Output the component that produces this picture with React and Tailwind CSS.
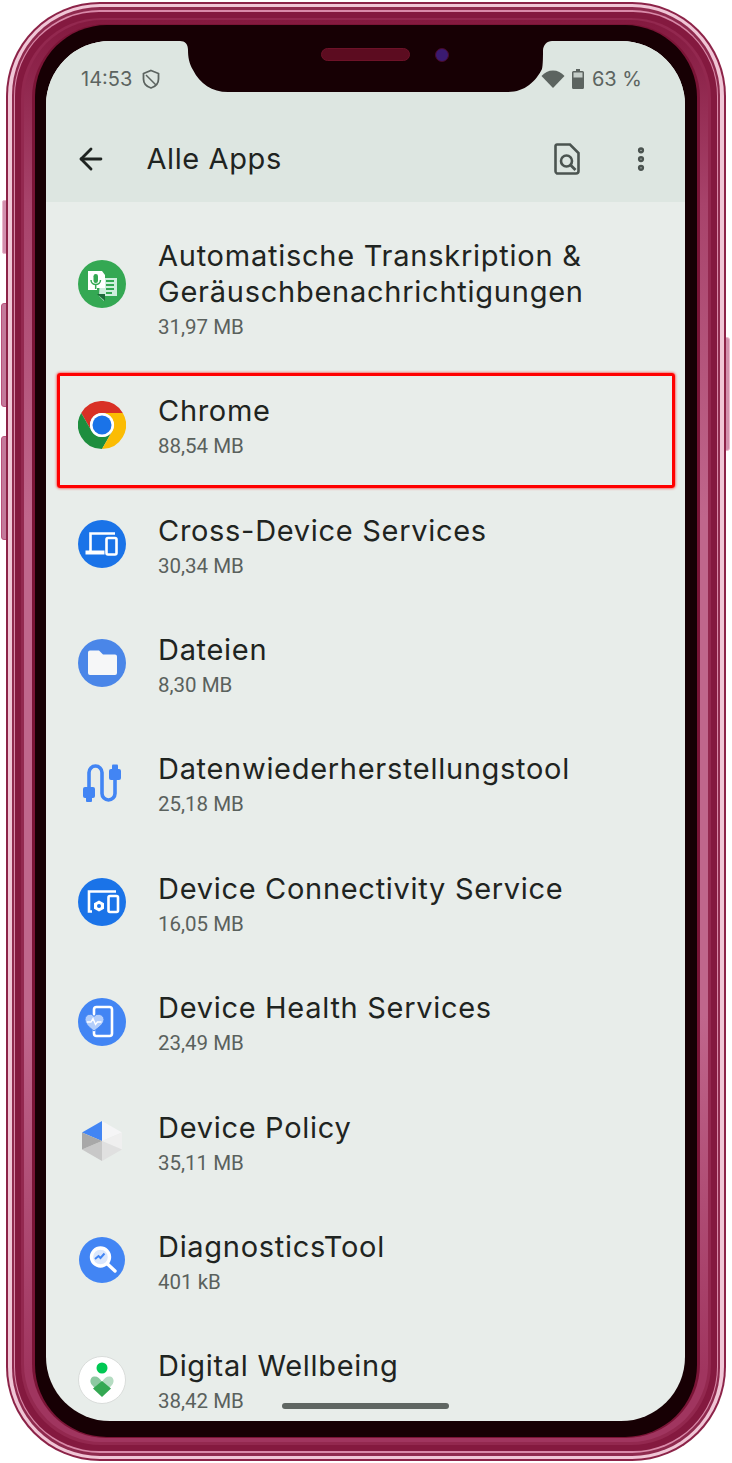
import React from 'react'
import { ArrowLeft, EllipsisVertical } from 'lucide-react'

const font = { fontFamily: '"Roboto", "Noto Sans", sans-serif' }
const titleFont = { fontFamily: '"Inter", "Roboto", sans-serif' }

function TranscribeIcon() {
  return (
    <svg viewBox="0 0 48 48" className="w-12 h-12">
      <circle cx="24" cy="24" r="24" fill="#34a853" />
      <path d="M22 18h17v18H27l-1 5-5-5z" fill="#cfeedd" />
      <path d="M10 11h14l3 4v13h-8v2l-1 0H10z" fill="#fff" />
      <path d="M19 34h8v7z" fill="#1e6b3a" />
      <rect x="15.500" y="14" width="4.500" height="9" rx="2.200" fill="#34a853" />
      <path d="M13 20c0 6 9.500 6 9.500 0M17.700 25v4" stroke="#34a853" strokeWidth="1.500" fill="none" />
      <path d="M28 21h8M28 25h8M28 29h8M28 33h6" stroke="#34a853" strokeWidth="1.800" />
    </svg>
  )
}

function ChromeIcon() {
  return (
    <svg viewBox="0 0 48 48" className="w-12 h-12">
      <path d="M24 12H44.800A24 24 0 0 0 3.200 12L13.600 30A12 12 0 0 1 24 12Z" fill="#d93025" />
      <path d="M13.600 30L3.200 12A24 24 0 0 0 24 48L34.400 30A12 12 0 0 1 13.600 30Z" fill="#1e8e3e" />
      <path d="M24 48A24 24 0 0 0 44.800 12H24A12 12 0 0 1 34.400 30Z" fill="#fbbc04" />
      <circle cx="24" cy="24" r="12" fill="#fff" />
      <circle cx="24" cy="24" r="9.500" fill="#1a73e8" />
    </svg>
  )
}

function CrossDeviceIcon() {
  return (
    <svg viewBox="0 0 48 48" className="w-12 h-12">
      <circle cx="24" cy="24" r="24" fill="#1a73e8" />
      <path d="M12.500 31V13.500H37" stroke="#fff" strokeWidth="2.600" fill="none" />
      <path d="M7.500 30.500h19v4h-19z" fill="#fff" />
      <rect x="28.500" y="18" width="10" height="16.500" rx="1.500" stroke="#fff" strokeWidth="2.600" fill="none" />
    </svg>
  )
}

function FilesIcon() {
  return (
    <svg viewBox="0 0 48 48" className="w-12 h-12">
      <circle cx="24" cy="24" r="24" fill="#4a86e8" />
      <path d="M10 13.500a2 2 0 0 1 2-2h9l4 4h12a2 2 0 0 1 2 2V34a2 2 0 0 1-2 2H12a2 2 0 0 1-2-2z" fill="#f6f7f8" />
    </svg>
  )
}

function CableIcon() {
  return (
    <svg viewBox="0 0 48 48" className="w-12 h-12">
      <path d="M11 30V13.500a6.500 6.500 0 0 1 13 0V34.500a6.500 6.500 0 0 0 13 0V20" stroke="#4285f4" strokeWidth="3.600" fill="none" />
      <rect x="5" y="28" width="12" height="11" rx="2" fill="#4285f4" />
      <rect x="8" y="37" width="6" height="6" rx="1" fill="#4285f4" />
      <rect x="31" y="10" width="12" height="11" rx="2" fill="#4285f4" />
      <rect x="34" y="5.500" width="6" height="6" rx="1" fill="#4285f4" />
    </svg>
  )
}

function ConnectivityIcon() {
  return (
    <svg viewBox="0 0 48 48" className="w-12 h-12">
      <circle cx="24" cy="24" r="24" fill="#1a73e8" />
      <path d="M14 33.500h-3V13.500h27" stroke="#fff" strokeWidth="2.600" fill="none" />
      <rect x="30.500" y="18" width="9.500" height="16" rx="1.500" stroke="#fff" strokeWidth="2.600" fill="none" />
      <path d="M21 22.500l5 2.800v5.400l-5 2.800-5-2.800v-5.400z" fill="#fff" />
      <circle cx="21" cy="28" r="2" fill="#1a73e8" />
    </svg>
  )
}

function HealthIcon() {
  return (
    <svg viewBox="0 0 48 48" className="w-12 h-12">
      <circle cx="24" cy="24" r="24" fill="#4285f4" />
      <rect x="16" y="9" width="18" height="29" rx="2.500" stroke="#fff" strokeWidth="2.600" fill="none" />
      <path d="M16 33c-4-3-9-7-9-11.500 0-5.500 7-7 9-3 2-4 10-2.500 10 3C26 26 20 30 16 33z" fill="#b3cefb" stroke="#4285f4" strokeWidth="1" />
      <path d="M9 24h4l2-3.500 2.500 6 2-2.500h4" stroke="#fff" strokeWidth="1.400" fill="none" />
    </svg>
  )
}

function PolicyIcon() {
  return (
    <svg viewBox="0 0 48 48" className="w-12 h-12">
      <path d="M24 24V4L4 15.500z" fill="#4285f4" />
      <path d="M24 4l20 11.500L24 24z" fill="#f5f5f6" />
      <path d="M44 15.500v17L24 24z" fill="#efefef" />
      <path d="M44 32.500L24 44V24z" fill="#e0e0e0" />
      <path d="M24 44L4 32.500 24 24z" fill="#c8c8c8" />
      <path d="M4 32.500v-17L24 24z" fill="#a8a8a8" />
    </svg>
  )
}

function DiagnosticsIcon() {
  return (
    <svg viewBox="0 0 48 48" className="w-12 h-12">
      <circle cx="24" cy="24" r="23" fill="#4285f4" />
      <circle cx="22.500" cy="21" r="9" stroke="#fff" strokeWidth="3.400" fill="#dbe7fc" />
      <path d="M29.500 28l7.500 7" stroke="#fff" strokeWidth="3.400" strokeLinecap="round" />
      <path d="M17 23l3.500-3 2 2 4-4.500" stroke="#4285f4" strokeWidth="2" fill="none" />
    </svg>
  )
}

function WellbeingIcon() {
  return (
    <svg viewBox="0 0 48 48" className="w-12 h-12">
      <circle cx="24" cy="24" r="23.500" fill="#ffffff" stroke="#d9dcda" strokeWidth="1" />
      <circle cx="24" cy="12" r="5.500" fill="#00c853" />
      <path d="M24 26c-2-4-5-6-8-5.500-3.500.5-5 5-2 8.500l10 11z" fill="#8cc9a1" />
      <path d="M24 26c2-4 5-6 8-5.500 3.500.5 5 5 2 8.500L24 40z" fill="#b5dcc2" />
      <path d="M24 25l-9 7.500 9 8.500 9-8.500z" fill="#34a853" />
    </svg>
  )
}

const apps = [
  { name: 'Chrome', size: '88,54 MB', icon: <ChromeIcon />, marked: true },
  { name: 'Cross-Device Services', size: '30,34 MB', icon: <CrossDeviceIcon /> },
  { name: 'Dateien', size: '8,30 MB', icon: <FilesIcon /> },
  { name: 'Datenwiederherstellungstool', size: '25,18 MB', icon: <CableIcon /> },
  { name: 'Device Connectivity Service', size: '16,05 MB', icon: <ConnectivityIcon /> },
  { name: 'Device Health Services', size: '23,49 MB', icon: <HealthIcon /> },
  { name: 'Device Policy', size: '35,11 MB', icon: <PolicyIcon /> },
  { name: 'DiagnosticsTool', size: '401 kB', icon: <DiagnosticsIcon /> },
  { name: 'Digital Wellbeing', size: '38,42 MB', icon: <WellbeingIcon /> },
]

function AppRow({ app }) {
  return (
    <div className="relative flex items-center h-[119.4px] shrink-0 pl-8 gap-8">
      {app.icon}
      <div className="flex flex-col pt-[8px]">
        <div className="text-[29px] leading-[36px] tracking-[0.7px] text-[#1f2421]" style={titleFont}>{app.name}</div>
        <div className="text-[20.500px] leading-[35px] text-[#5a615d]">{app.size}</div>
      </div>
      {app.marked && (
        <div className="absolute left-[11px] right-[10px] top-2 bottom-[-4px] border-[3px] border-[#ff0000] rounded-[3px] shadow-[0_0_3px_#ff0000]" />
      )}
    </div>
  )
}

function Notch() {
  return (
    <svg viewBox="0 0 372 52" className="absolute left-[134px] top-0 w-[372px] h-[52px]">
      <path d="M0 0C5 0 8 3 8 9C8 16 9 22 13 29C20 43 32 51 48 51H328C345 51 356 40 362 28C363 24 363 15 363 10C363 4 367 0 372 0Z" fill="#170004" />
      <rect x="141.500" y="7.500" width="88" height="12" rx="6" fill="#5c0c20" stroke="#6d1228" />
      <circle cx="262" cy="14" r="6.500" fill="#3a1a70" stroke="#4a0a28" />
    </svg>
  )
}

export default function App() {
  return (
    <div className="relative w-[732px] h-[1463px] bg-white pl-[6px] pr-[6px] pt-[2px] pb-[2px] overflow-hidden" style={font}>
      {/* side buttons */}
      <div className="absolute left-[2px] top-[200px] w-[6px] h-[54px] rounded-l-[2px] bg-[#d291ae] border border-[#eab9cc]" />
      <div className="absolute left-[1px] top-[303px] w-[7px] h-[104px] rounded-l-[3px] bg-[#c47a9b] border border-[#b9527c]" />
      <div className="absolute left-[1px] top-[436px] w-[7px] h-[104px] rounded-l-[3px] bg-[#c47a9b] border border-[#b9527c]" />
      <div className="absolute right-[2px] top-[337px] w-[6px] h-[114px] rounded-r-[3px] bg-[#d291ae] border border-[#eab9cc]" />

      {/* frame rings */}
      <div className="relative h-full rounded-[94px] bg-[#8c2348] p-[2px]">
        <div className="h-full rounded-[92px] bg-[#f0c6d6] pt-[3px] pb-[3px] pl-[4px] pr-[4px]">
          <div className="h-full rounded-[88px] bg-[#8f2a4e] pt-[3px] pb-[3px] pl-[2px] pr-[2px]">
            <div className="h-full rounded-[86px] bg-[#d98aa9] pt-[2px] pb-[2px] pl-[1px] pr-[1px]">
              <div className="h-full rounded-[84px] bg-[#84193f] pt-[6px] pb-[6px] pl-[6px] pr-[6px]">
                <div className="h-full rounded-[80px] bg-[#93284f] pt-[2px] pb-[3px] pl-[3px] pr-[3px]">
                  <div className="h-full rounded-[78px] bg-[linear-gradient(180deg,#84193f_0%,#a8436b_13%,#c0668c_35%,#c0668c_70%,#a0355f_95%)] pt-[4px] pb-[4px] pl-[8px] pr-[8px]">
                    <div className="h-full rounded-[74px] bg-[#7a1436] pt-[1px] pb-[1px] pl-[3px] pr-[3px]">
                      <div className="h-full rounded-[72px] bg-[#170004] pt-[16px] pb-[16px] pl-[11px] pr-[12px]">
                        {/* screen */}
                        <div className="relative flex flex-col h-full rounded-[64px] overflow-hidden bg-[#e8edea]">
                          <div className="h-[161px] shrink-0 flex flex-col bg-[#dde6e1]">
                            <div className="flex items-center justify-between h-[76px] pl-[35px] pr-[43px] text-[20px] text-[#5c6460]" style={titleFont}>
                              <div className="flex items-center gap-[10px]">
                                <span>14:53</span>
                                <svg viewBox="0 0 18 20" className="w-[18px] h-[20px]">
                                  <path d="M9 1.500l7.500 3v5.500c0 4.500-3.200 7.700-7.500 9-4.300-1.300-7.500-4.500-7.500-9V4.500z" fill="none" stroke="#5c6460" strokeWidth="1.800" />
                                  <path d="M4 6l10 10" stroke="#5c6460" strokeWidth="1.500" />
                                </svg>
                              </div>
                              <div className="flex items-center gap-[7px]">
                                <svg viewBox="0 0 24 18" className="w-[24px] h-[18px]">
                                  <path d="M0.500 6C3.500 2.500 7.500 0.500 12 0.500S20.500 2.500 23.500 6L12 18z" fill="#5c6460" />
                                </svg>
                                <svg viewBox="0 0 12 20" className="w-[12px] h-[20px]">
                                  <path d="M4 0h4v2h2.500a1.500 1.500 0 0 1 1.500 1.500V18.500A1.500 1.500 0 0 1 10.500 20h-9A1.500 1.500 0 0 1 0 18.500V3.500A1.500 1.500 0 0 1 1.500 2H4z" fill="#5c6460" />
                                  <path d="M1.500 3.500h9v5h-9z" fill="#c5cec9" />
                                </svg>
                                <span className="ml-[1px]">63 %</span>
                              </div>
                            </div>
                            <div className="flex items-center h-[85px] pl-[27.500px] pr-[34px] pb-[2px]">
                              <ArrowLeft className="w-[34px] h-[34px] text-[#1f2421]" strokeWidth={2} />
                              <div className="ml-[39px] text-[29px] tracking-[0.6px] text-[#1f2421]" style={titleFont}>Alle Apps</div>
                              <div className="ml-auto flex items-center gap-[51px]">
                                <svg viewBox="0 0 26 32" className="w-[26px] h-[32px]">
                                  <path d="M3 1.500h13l8.500 8.500v18a2.500 2.500 0 0 1-2.500 2.500H3A2.500 2.500 0 0 1 1.500 28V3A1.500 1.500 0 0 1 3 1.500z" fill="none" stroke="#4b5450" strokeWidth="2.600" />
                                  <circle cx="12.500" cy="18" r="5.500" fill="none" stroke="#4b5450" strokeWidth="2.600" />
                                  <path d="M16.500 22l5 5" stroke="#4b5450" strokeWidth="2.800" />
                                </svg>
                                <EllipsisVertical className="w-[30px] h-[30px] text-[#4b5450] -mx-[5px]" strokeWidth={3} />
                              </div>
                            </div>
                          </div>

                          <div className="flex flex-col flex-1 overflow-hidden">
                            <div className="flex items-center h-[163px] shrink-0 pl-8 gap-8">
                              <TranscribeIcon />
                              <div className="flex flex-col pt-[16px]">
                                <div className="text-[29px] leading-[36px] tracking-[0.75px] text-[#1f2421]" style={titleFont}>Automatische Transkription &amp;</div>
                                <div className="text-[29px] leading-[36px] tracking-[0.75px] text-[#1f2421]" style={titleFont}>Geräuschbenachrichtigungen</div>
                                <div className="text-[20.500px] leading-[35px] text-[#5a615d]">31,97 MB</div>
                              </div>
                            </div>
                            {apps.map((app) => (
                              <AppRow key={app.name} app={app} />
                            ))}
                          </div>

                          <Notch />
                          <div className="absolute left-[236px] bottom-[12px] w-[167px] h-[6px] rounded-full bg-[#5f6662]" />
                        </div>
                      </div>
                    </div>
                  </div>
                </div>
              </div>
            </div>
          </div>
        </div>
      </div>
    </div>
  )
}
